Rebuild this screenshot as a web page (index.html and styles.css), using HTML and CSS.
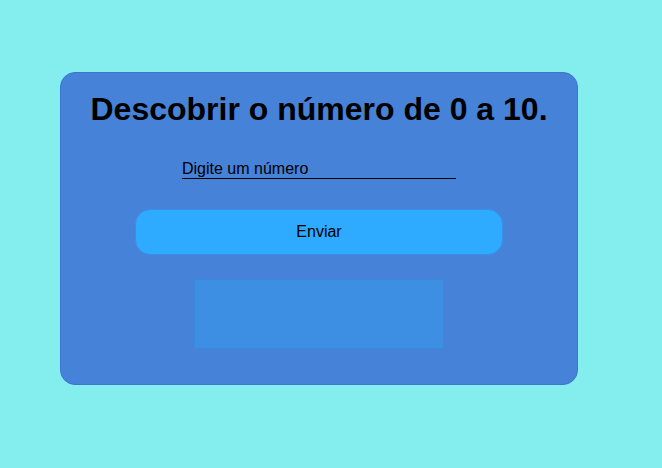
FILE: index.html
```html
<!DOCTYPE html>
<html lang="pt">
<head>
<meta charset="utf-8">
<title>Descobrir o número</title>
<link rel="stylesheet" href="styles.css">
</head>
<body>
  <main class="card">
    <h1 class="title">Descobrir o número de 0 a 10.</h1>
    <input class="guess" type="text" placeholder="Digite um número">
    <button class="send" type="button">Enviar</button>
    <div class="result"></div>
  </main>
</body>
</html>
```

FILE: styles.css
```css
html, body {
  margin: 0;
  padding: 0;
}

body {
  background: #84eeee;
  font-family: "Liberation Sans", Arial, sans-serif;
  padding: 72px 0 0 60px;
  min-height: 468px;
  box-sizing: border-box;
}

.card {
  box-sizing: border-box;
  width: 518px;
  height: 313px;
  background: #4682d8;
  border: 1px solid #3d74d2;
  border-radius: 15px;
  display: flex;
  flex-direction: column;
  align-items: center;
  padding-top: 18px;
}

.title {
  margin: 0;
  font-size: 32px;
  font-weight: bold;
  color: #000;
  line-height: 37px;
}

.guess {
  margin-top: 30px;
  width: 274px;
  box-sizing: border-box;
  height: 21px;
  padding: 2px 0 0;
  border: none;
  border-bottom: 1px solid #000;
  background: transparent;
  font-family: "Liberation Sans", Arial, sans-serif;
  font-size: 16px;
  color: #000;
  outline: none;
}

.guess::placeholder {
  color: #000;
  opacity: 1;
}

.send {
  margin-top: 30px;
  width: 368px;
  height: 46px;
  box-sizing: border-box;
  background: #2eaaff;
  border: 1px solid #3a8ee6;
  border-radius: 15px;
  font-family: "Liberation Sans", Arial, sans-serif;
  font-size: 16px;
  color: #000;
  padding: 0;
}

.result {
  margin-top: 24px;
  width: 250px;
  height: 70px;
  box-sizing: border-box;
  background: #3c8fe2;
  border: 1px solid #3a88e0;
}
```
